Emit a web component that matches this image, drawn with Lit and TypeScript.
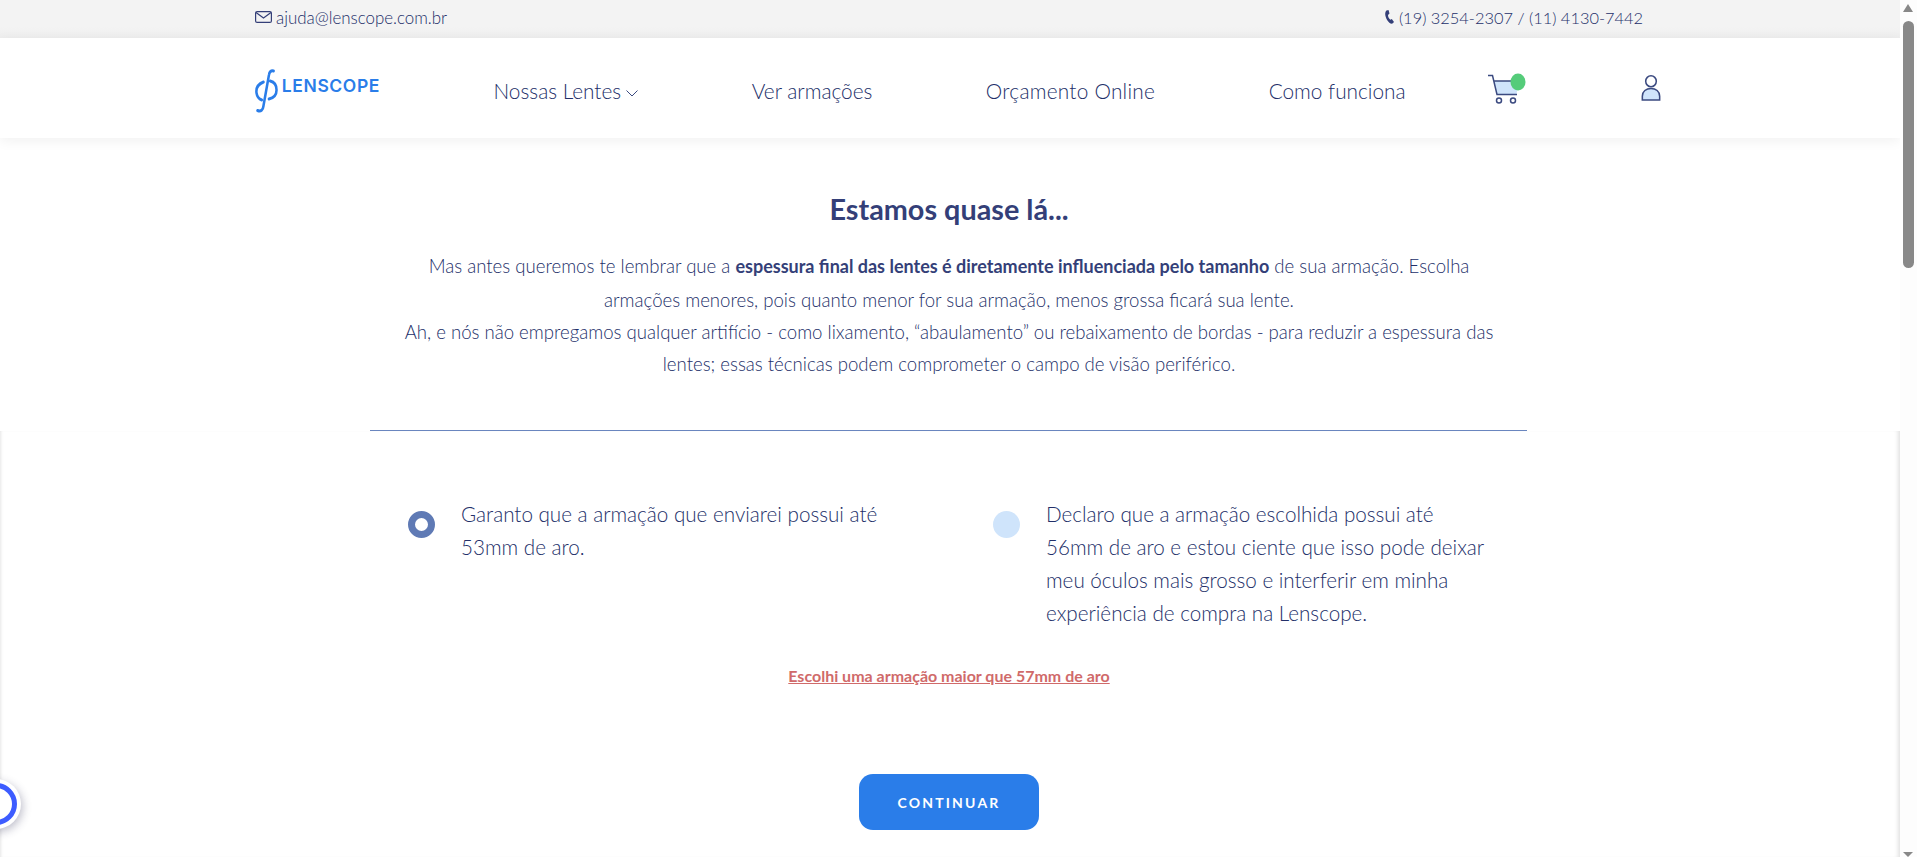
import { LitElement, html, css } from "lit";
import { customElement } from "lit/decorators.js";

@customElement("app-root")
export class AppRoot extends LitElement {
  static styles = css`
    :host { display: block; height: 857px; overflow: hidden; position: relative; background: #fff; font-family: "Lato", "Liberation Sans", sans-serif; font-weight: 300; color: #232f69; }
    .page { width: 1900px; }
    .top { height: 38px; background: linear-gradient(#f3f3f3 70%, #eeeeee); display: flex; align-items: center; justify-content: space-between; padding: 0 257px 4px 255px; box-sizing: border-box; font-size: 16.4px; }
    .top span { display: flex; align-items: center; gap: 4px; }
    .top .mail { font-size: 16.9px; }
    .nav { height: 100px; background: #fff; display: flex; align-items: center; padding: 5px 0 0 255px; box-sizing: border-box; gap: 113.5px; box-shadow: 0 3px 12px rgba(0,0,0,.06); position: relative; font-size: 20.8px; }
    .logo { display: flex; align-items: flex-start; width: 125px; height: 44px; color: #2a7de9; font-family: "Inter", sans-serif; font-weight: 600; font-size: 17.5px; }
    .logo b { font-weight: 600; margin: 7px 0 0 4px; line-height: 20px; letter-spacing: .6px; }
    .nav a { white-space: nowrap; display: flex; align-items: center; gap: 5px; }
    .nav a svg { margin-top: 5px; }
    .nav .wide { letter-spacing: .25px; }
    .cart { margin: -4px 0 0 -31px; height: 32px; }
    .user { margin: -6px 0 0 1px; height: 26px; }
    .intro { text-align: center; padding: 52px 2px 0 0; }
    h1 { margin: 0; font-size: 28.8px; line-height: 38px; font-weight: 700; color: #343f78; }
    .intro p { margin: 0 auto; font-size: 18.6px; white-space: nowrap; }
    .p1 { line-height: 34px; padding-top: 21px; }
    .intro .p2 { line-height: 32px; margin-top: -1px; }
    .intro b { font-size: 18px; font-weight: 700; color: #343f78; }
    .rule { height: 1px; background: #6a86bf; margin: 50px 373px 0 370px; }
    .card { box-shadow: inset 3px 0 3px -2px rgba(0,0,0,.1), inset -5px 0 4px -3px rgba(0,0,0,.12); background: #fff; height: 426px; padding-top: 67px; box-sizing: border-box; }
    .opts { display: flex; padding-left: 408px; }
    .opt { display: flex; gap: 26px; font-size: 20.65px; line-height: 33px; }
    .opt:first-child { width: 585px; }
    .radio { flex: none; width: 27px; height: 27px; border-radius: 50%; margin-top: 13px; box-sizing: border-box; }
    .on { border: 7px solid #5f7ab5; background: #fff; }
    .off { background: #cfe4fb; }
    .link { display: block; text-align: center; margin-top: 35px; padding-right: 2px; font-size: 16px; font-weight: 700; line-height: 22px; color: #d06a6a; text-decoration: underline; }
    .btnrow { display: flex; justify-content: center; margin-top: 87px; padding-right: 2px; }
    .btn { width: 180px; height: 56px; border-radius: 14px; background: #2a7de9; color: #fff; font-size: 14px; font-weight: 700; letter-spacing: 2.2px; display: flex; align-items: center; justify-content: center; }
    .sb { position: absolute; top: 0; right: 0; width: 17px; height: 857px; background: #fdfdfd; }
    .thumb { position: absolute; left: 3px; top: 21px; width: 11px; height: 247px; background: #888; border-radius: 6px; }
    .up, .down { position: absolute; left: 3px; width: 0; height: 0; border-left: 5.5px solid transparent; border-right: 5.5px solid transparent; }
    .up { top: 4px; border-bottom: 8px solid #888; }
    .down { bottom: 0; border-top: 5px solid #888; }
    .a11y { position: absolute; left: -29px; top: 779px; width: 50px; height: 50px; border-radius: 50%; background: #fff; box-shadow: 2px 3px 8px rgba(50,50,90,.3); display: flex; align-items: center; justify-content: center; }
    .a11y i { width: 42px; height: 42px; border-radius: 50%; border: 5px solid #3d5cff; box-sizing: border-box; }
  `;
  render() {
    return html`
      <div class="page">
        <div class="top">
          <span class="mail"><svg width="17" height="12" viewBox="0 0 17 12" fill="none" stroke="#343f78" stroke-width="1.2"><rect x=".6" y=".6" width="15.800" height="10.800" rx="1.500"/><path d="M1 1.500l7.500 5.500L16 1.500"/></svg>ajuda@lenscope.com.br</span>
          <span><svg width="11" height="14" viewBox="0 0 9 14" fill="#343f78"><path d="M1.500.5L3.500 0l1 3.500L3 5c0 2 1 3.800 2.300 4.700l1.500-.7L9 12l-1.500 1.600C4 14.500.2 8 .2 4c0-1.500.5-3 1.300-3.500z"/></svg>(19) 3254-2307 / (11) 4130-7442</span>
        </div>
        <div class="nav">
          <div class="logo">
            <svg width="23" height="44" viewBox="0 0 27 44" preserveAspectRatio="none" fill="none" stroke="#2a7de9" stroke-width="3" stroke-linecap="round"><path d="M22 2c-3-1-5 1-5.500 4L10 37c-.5 4-3 6-7 4.500"/><path d="M10 13C4 15 1 19 1.800 24c.7 4 3 6 6.200 7"/><path d="M18 12c5 1 7.500 4 7.500 9 0 5-4 8-9 9"/></svg>
            <b>LENSCOPE</b>
          </div>
          <a>Nossas Lentes <svg width="12" height="7" viewBox="0 0 12 7" fill="none" stroke="#3b4a80"><path d="M.5.5L6 6l5.500-5.500"/></svg></a>
          <a>Ver armações</a>
          <a class="wide">Orçamento Online</a>
          <a>Como funciona</a>
          <svg class="cart" width="38" height="32" viewBox="0 0 38 32" fill="none" stroke="#3b4a80" stroke-width="1.500"><path d="M6 8h24v5l-1.500 8H9z" fill="#cfe4fb" stroke="none"/><path d="M0 2.500h4.500L9 21.500h20M6 8h24"/><circle cx="11" cy="27.500" r="2.500"/><circle cx="25" cy="27.500" r="2.500"/><ellipse cx="30" cy="9" rx="7.500" ry="8.500" fill="#55cc7a" stroke="none"/></svg>
          <svg class="user" width="20" height="27" viewBox="0 0 20 27" fill="none" stroke="#3b4a80" stroke-width="1.600"><ellipse cx="10" cy="6.500" rx="5.500" ry="5.700"/><path d="M1 26v-4c0-5 4-8 9-8s9 3 9 8v4z" fill="#cfe4fb"/></svg>
        </div>
        <div class="intro">
          <h1>Estamos quase lá...</h1>
          <p class="p1">Mas antes queremos te lembrar que a <b>espessura final das lentes é diretamente influenciada pelo tamanho</b> de sua armação. Escolha<br>armações menores, pois quanto menor for sua armação, menos grossa ficará sua lente.</p>
          <p class="p2">Ah, e nós não empregamos qualquer artifício - como lixamento, “abaulamento” ou rebaixamento de bordas - para reduzir a espessura das<br>lentes; essas técnicas podem comprometer o campo de visão periférico.</p>
        </div>
        <div class="rule"></div>
        <div class="card">
          <div class="opts">
            <div class="opt"><div class="radio on"></div><div>Garanto que a armação que enviarei possui até<br>53mm de aro.</div></div>
            <div class="opt"><div class="radio off"></div><div>Declaro que a armação escolhida possui até<br>56mm de aro e estou ciente que isso pode deixar<br>meu óculos mais grosso e interferir em minha<br>experiência de compra na Lenscope.</div></div>
          </div>
          <a class="link">Escolhi uma armação maior que 57mm de aro</a>
          <div class="btnrow"><div class="btn">CONTINUAR</div></div>
        </div>
      </div>
      <div class="a11y"><i></i></div>
      <div class="sb"><div class="up"></div><div class="thumb"></div><div class="down"></div></div>
    `;
  }
}
